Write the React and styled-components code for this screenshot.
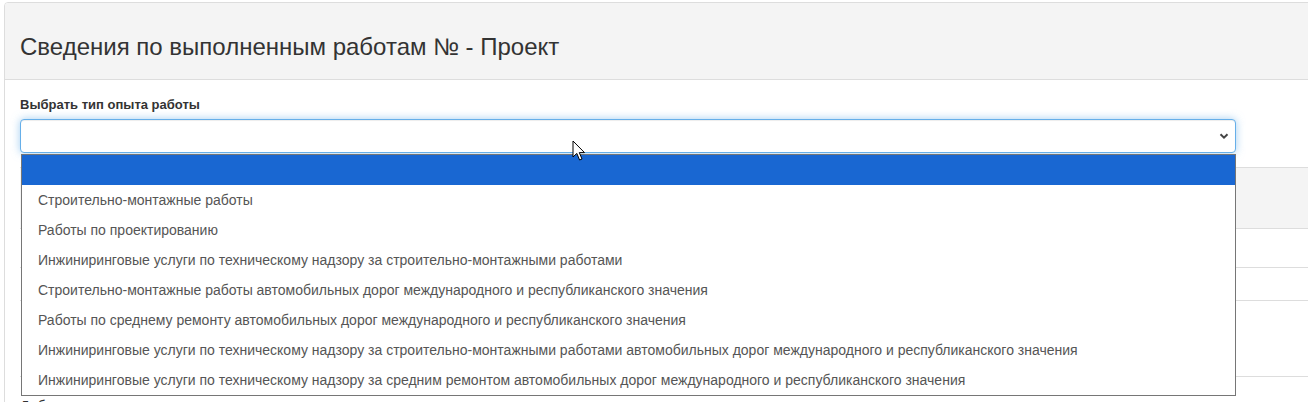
import React from "react";
import styled, { createGlobalStyle } from "styled-components";

const GlobalStyle = createGlobalStyle`
  html, body {
    margin: 0;
    padding: 0;
    overflow: hidden;
    background: #fff;
    font-family: "Liberation Sans", Arial, sans-serif;
    color: #333;
  }
  * { box-sizing: border-box; }
`;

const Page = styled.div`
  padding: 2px 0 0 4px;
  width: 1400px;
`;

const Card = styled.section`
  width: 1380px;
  border: 1px solid #dddddd;
  border-radius: 4px 0 0 4px;
  background: #fff;
`;

const CardHeader = styled.header`
  height: 77px;
  padding: 30px 15px 0;
  background: #f4f4f4;
  border-bottom: 1px solid #dddddd;
  border-radius: 3px 0 0 0;
`;

const Title = styled.h3`
  margin: 0;
  font-size: 24px;
  line-height: 27px;
  font-weight: 400;
  color: #333;
`;

const CardBody = styled.div`
  padding: 16px 15px 20px;
`;

const Label = styled.label`
  display: block;
  font-size: 13px;
  line-height: 18px;
  font-weight: 700;
  color: #333;
  margin-bottom: 5px;
`;

const SelectWrap = styled.div`
  position: relative;
  width: 1216px;
`;

const SelectBox = styled.div`
  height: 34px;
  border: 1px solid #66afe9;
  border-radius: 4px;
  background: #fff;
  box-shadow: inset 0 1px 1px rgba(0, 0, 0, 0.075), 0 0 8px rgba(102, 175, 233, 0.6);
  display: flex;
  align-items: center;
  justify-content: flex-end;
  padding-right: 6px;
  color: #444;
`;

const Dropdown = styled.ul`
  position: absolute;
  left: 1px;
  top: 35px;
  width: 1215px;
  margin: 0;
  padding: 0;
  list-style: none;
  background: #fff;
  border: 1px solid #767676;
  z-index: 10;
`;

const Option = styled.li`
  height: 30px;
  display: flex;
  align-items: center;
  padding-left: 16px;
  font-size: 14px;
  color: #555;
  background: ${(p) => (p.$active ? "#1967d2" : "transparent")};
  white-space: nowrap;
`;

const TableArea = styled.div`
  margin-top: 14px;
  width: 1360px;
`;

const TableHead = styled.div`
  height: 62px;
  background: #f4f4f4;
  border-top: 1px solid #dddddd;
  border-bottom: 1px solid #dddddd;
`;

const TableRow = styled.div`
  height: ${(p) => p.$h}px;
  border-bottom: 1px solid #dddddd;
`;

const FooterText = styled.div`
  margin-top: 19px;
  font-size: 14px;
  line-height: 20px;
  color: #333;
`;

const Cursor = styled.svg`
  position: absolute;
  left: 572px;
  top: 140px;
  z-index: 20;
`;

const Chevron = () => (
  <svg width="10" height="8" viewBox="0 0 10 8">
    <path d="M1.5 2.2 L5 5.6 L8.5 2.2" fill="none" stroke="#444" strokeWidth="2" />
  </svg>
);

const options = [
  "",
  "Строительно-монтажные работы",
  "Работы по проектированию",
  "Инжиниринговые услуги по техническому надзору за строительно-монтажными работами",
  "Строительно-монтажные работы автомобильных дорог международного и республиканского значения",
  "Работы по среднему ремонту автомобильных дорог международного и республиканского значения",
  "Инжиниринговые услуги по техническому надзору за строительно-монтажными работами автомобильных дорог международного и республиканского значения",
  "Инжиниринговые услуги по техническому надзору за средним ремонтом автомобильных дорог международного и республиканского значения",
];

export default function App() {
  return (
    <>
      <GlobalStyle />
      <Page>
        <Card>
          <CardHeader>
            <Title>Сведения по выполненным работам № - Проект</Title>
          </CardHeader>
          <CardBody>
            <Label>Выбрать тип опыта работы</Label>
            <SelectWrap>
              <SelectBox>
                <Chevron />
              </SelectBox>
              <Dropdown>
                {options.map((o, i) => (
                  <Option key={i} $active={i === 0}>
                    {o}
                  </Option>
                ))}
              </Dropdown>
            </SelectWrap>
            <TableArea>
              <TableHead />
              <TableRow $h={39} />
              <TableRow $h={33} />
              <TableRow $h={76} />
            </TableArea>
            <FooterText>Добавить</FooterText>
          </CardBody>
        </Card>
      </Page>
      <Cursor width="14" height="22" viewBox="0 0 14 22">
        <path
          d="M1 1 L1 17 L4.8 13.4 L7.6 20 L10 19 L7.3 12.6 L12.5 12.6 Z"
          fill="#fff"
          stroke="#000"
          strokeWidth="1"
          strokeLinejoin="round"
        />
      </Cursor>
    </>
  );
}
